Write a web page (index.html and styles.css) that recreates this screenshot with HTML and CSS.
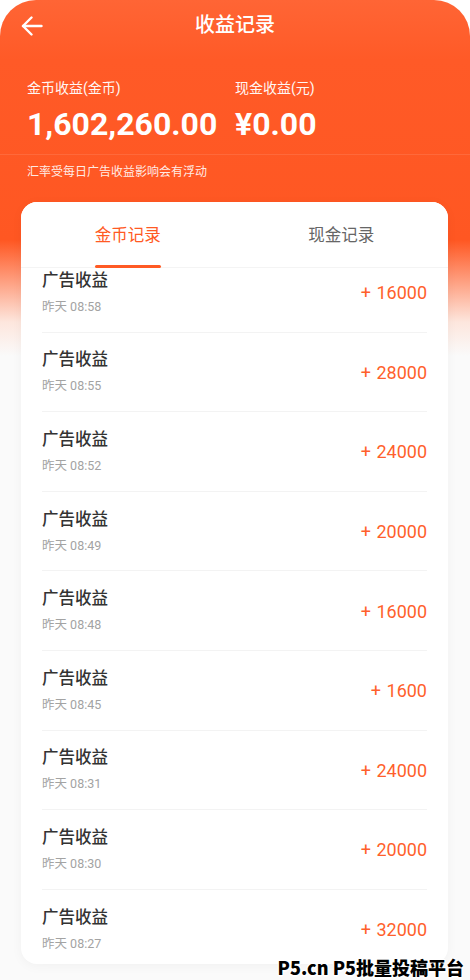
FILE: index.html
```html
<!DOCTYPE html>
<html lang="zh-CN">
<head>
  <meta charset="UTF-8">
  <meta name="viewport" content="width=device-width, initial-scale=1.0">
  <title>收益记录</title>
  <link rel="stylesheet" href="styles.css">
</head>
<body>
  <div class="screen">
    <div class="topbar">
      <span class="back">
        <svg width="22" height="20" viewBox="0 0 22 20" fill="none" stroke="#fff" stroke-width="2.4" stroke-linecap="round" stroke-linejoin="round">
          <path d="M20.5 10H2"/>
          <path d="M10.5 1.5L2 10l8.5 8.5"/>
        </svg>
      </span>
      <h1>收益记录</h1>
    </div>

    <div class="summary">
      <div class="stat coin">
        <p class="label">金币收益(金币)</p>
        <p class="value">1,602,260.00</p>
      </div>
      <div class="stat">
        <p class="label">现金收益(元)</p>
        <p class="value">¥0.00</p>
      </div>
    </div>
    <p class="note">汇率受每日广告收益影响会有浮动</p>

    <div class="card">
      <div class="tabs">
        <div class="tab active">金币记录</div>
        <div class="tab">现金记录</div>
      </div>
      <ul class="list">
        <li class="row"><div><p class="title">广告收益</p><p class="time">昨天 08:58</p></div><span class="amount">+ 16000</span></li>
        <li class="row"><div><p class="title">广告收益</p><p class="time">昨天 08:55</p></div><span class="amount">+ 28000</span></li>
        <li class="row"><div><p class="title">广告收益</p><p class="time">昨天 08:52</p></div><span class="amount">+ 24000</span></li>
        <li class="row"><div><p class="title">广告收益</p><p class="time">昨天 08:49</p></div><span class="amount">+ 20000</span></li>
        <li class="row"><div><p class="title">广告收益</p><p class="time">昨天 08:48</p></div><span class="amount">+ 16000</span></li>
        <li class="row"><div><p class="title">广告收益</p><p class="time">昨天 08:45</p></div><span class="amount">+ 1600</span></li>
        <li class="row"><div><p class="title">广告收益</p><p class="time">昨天 08:31</p></div><span class="amount">+ 24000</span></li>
        <li class="row"><div><p class="title">广告收益</p><p class="time">昨天 08:30</p></div><span class="amount">+ 20000</span></li>
        <li class="row"><div><p class="title">广告收益</p><p class="time">昨天 08:27</p></div><span class="amount">+ 32000</span></li>
      </ul>
    </div>

    <div class="watermark">P5.cn P5批量投稿平台</div>
  </div>
</body>
</html>
```

FILE: styles.css
```css
body {
  margin: 0;
  background: #ffffff;
  font-family: Roboto, "Noto Sans CJK SC", sans-serif;
}

p, h1, ul {
  margin: 0;
  padding: 0;
}

.screen {
  position: relative;
  width: 470px;
  height: 980px;
  overflow: hidden;
  border-radius: 36px 36px 0 0;
  background: linear-gradient(180deg, #ff6535 0, #ff5a27 60px, #ff5722 240px, #fde6dd 322px, #fafafa 356px, #fafafa 100%);
}

.topbar {
  position: relative;
  height: 50px;
  display: flex;
  align-items: center;
  justify-content: center;
}

.topbar h1 {
  color: #fff;
  font-size: 20px;
  font-weight: 500;
  line-height: 50px;
}

.back {
  position: absolute;
  left: 21px;
  top: 16px;
  display: flex;
}

.summary {
  display: flex;
  padding: 28px 0 0 27px;
  height: 105px;
  box-sizing: border-box;
  border-bottom: 1px solid rgba(255, 255, 255, 0.1);
}

.stat.coin {
  width: 208px;
}

.label {
  color: #fff;
  font-size: 14px;
  line-height: 20px;
  opacity: 0.95;
}

.value {
  color: #fff;
  font-size: 32px;
  font-weight: 700;
  line-height: 40px;
  margin-top: 6px;
}

.note {
  color: rgba(255, 255, 255, 0.9);
  font-size: 12px;
  line-height: 18px;
  padding: 8px 0 0 27px;
}

.card {
  margin: 21px 22px 0 21px;
  height: 762px;
  background: #fff;
  border-radius: 16px;
  overflow: hidden;
  box-shadow: 0 2px 12px rgba(0, 0, 0, 0.04);
}

.tabs {
  display: flex;
  height: 66px;
  border-bottom: 1px solid #f4f4f4;
  box-sizing: border-box;
  position: relative;
  z-index: 1;
  background: #fff;
}

.tab {
  flex: 1;
  position: relative;
  text-align: center;
  font-size: 16.5px;
  line-height: 68px;
  color: #666;
}

.tab.active {
  color: #ff5a24;
}

.tab.active::after {
  content: "";
  position: absolute;
  left: 50%;
  bottom: -1px;
  width: 66px;
  height: 3px;
  margin-left: -33px;
  border-radius: 2px;
  background: #ff5a24;
}

.list {
  list-style: none;
  padding: 0 21px;
  margin-top: -16px;
}

.row {
  display: flex;
  align-items: center;
  justify-content: space-between;
  height: 79.6px;
  box-sizing: border-box;
  border-top: 1px solid #f3f3f3;
}

.title {
  color: #333;
  font-size: 16.5px;
  font-weight: 500;
  line-height: 22px;
  padding-top: 1px;
}

.time {
  color: #a3a3a3;
  font-size: 12.5px;
  line-height: 18px;
  margin-top: 6px;
}

.amount {
  color: #ff5f2c;
  font-size: 18px;
  font-weight: 400;
  padding-top: 1px;
  word-spacing: 1px;
}

.watermark {
  position: absolute;
  right: 6px;
  bottom: 2px;
  font-family: "Noto Sans CJK SC", sans-serif;
  font-size: 18px;
  font-weight: 900;
  color: #000;
  line-height: 22px;
  text-shadow: -1px -1px 0 #fff, 1px -1px 0 #fff, -1px 1px 0 #fff, 1px 1px 0 #fff, 0 2px 0 #fff;
}
```
